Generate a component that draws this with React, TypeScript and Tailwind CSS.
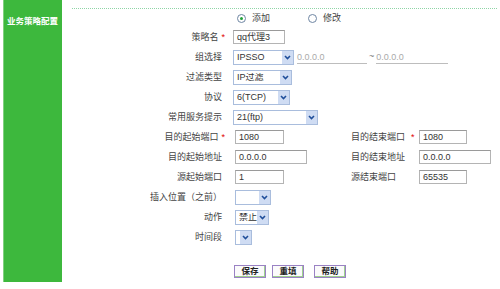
import type { ReactNode } from 'react'

function Chevron() {
  return (
    <svg width="7" height="5" viewBox="0 0 7 5" fill="none">
      <path d="M1 1L3.5 3.5L6 1" stroke="#1f4e9a" strokeWidth="1.6" />
    </svg>
  )
}

function Select({ value, className }: { value?: string; className: string }) {
  return (
    <div className={`flex h-[15px] items-center border border-[#a9bddd] bg-white ${className}`}>
      <span className="flex-1 overflow-hidden whitespace-nowrap pl-[3px] text-[9px] leading-none text-[#333]">
        {value}
      </span>
      <span className="flex h-[13px] w-[11px] shrink-0 items-center justify-center bg-[#cfdcf3]">
        <Chevron />
      </span>
    </div>
  )
}

function Input({ value, className }: { value: string; className: string }) {
  return (
    <div
      className={`flex h-[14px] items-center border border-[#b4b4b4] border-t-[#9a9a9a] bg-white pl-[3px] text-[9px] leading-none text-[#333] ${className}`}
    >
      {value}
    </div>
  )
}

function Star() {
  return <span className="ml-[3px] mr-[-3px] text-[9px] text-[#e00000]">*</span>
}

function Row({
  label,
  star,
  children,
  right,
}: {
  label: string
  star?: boolean
  children: ReactNode
  right?: { label: string; star?: boolean; field: ReactNode }
}) {
  return (
    <div className="flex h-[20px] items-center">
      <div className="w-[160px] shrink-0 text-right text-[9px] leading-none text-[#444]">
        {label}
        {star && <Star />}
      </div>
      <div className="ml-[11px] flex min-w-[118px] items-center">{children}</div>
      {right && (
        <>
          <div className="w-[68px] shrink-0 text-[9px] leading-none text-[#444]">
            {right.label}
            {right.star && <span className="ml-[6px] text-[9px] text-[#e00000]">*</span>}
          </div>
          {right.field}
        </>
      )}
    </div>
  )
}

function Radio({ checked, label }: { checked?: boolean; label: string }) {
  return (
    <label className="flex items-center gap-[6px]">
      <span className="flex size-[9px] items-center justify-center rounded-full border border-[#6f86a3] bg-white">
        {checked && <span className="size-[3px] rounded-full bg-[#22a03a]" />}
      </span>
      <span className="text-[9px] leading-none text-[#444]">{label}</span>
    </label>
  )
}

function Button({ children }: { children: string }) {
  return (
    <button
      type="button"
      className="flex h-[13px] w-[32px] items-center justify-center border border-[#9a82c4] bg-[#fbfbfb] text-[8.5px] font-bold leading-none text-[#222] shadow-[inset_-1px_-1px_0_#9fd18f]"
    >
      {children}
    </button>
  )
}

export default function App() {
  return (
    <div className="flex h-[289px] w-[500px] bg-white font-[family-name:Liberation_Sans,Noto_Sans_CJK_SC,sans-serif]">
      <div className="ml-[3px] h-[282px] w-[59px] shrink-0 border-l border-[#7fd17f] bg-[#3db83d] pl-[3px] pt-[7px]">
        <span className="text-[8.5px] font-bold leading-none text-white">业务策略配置</span>
      </div>

      <div className="flex flex-1 flex-col">
        <div className="ml-[10px] mr-[3px] mt-[8px] border-t border-dotted border-[#8fd5a6]" />

        <div className="flex h-[18px] items-center pl-[175px] pt-[1px]">
          <Radio checked label="添加" />
          <div className="ml-[38px]">
            <Radio label="修改" />
          </div>
        </div>

        <Row label="策略名" star>
          <Input value="qq代理3" className="w-[52px]" />
        </Row>

        <Row label="组选择">
          <Select value="IPSSO" className="w-[61px]" />
          <div className="ml-[3px] w-[70px] border-b border-[#bdbdbd] text-[9px] leading-[12px] text-[#aaa]">
            0.0.0.0
          </div>
          <span className="mx-[2px] text-[9px] text-[#777]">~</span>
          <div className="w-[72px] border-b border-[#bdbdbd] text-[9px] leading-[12px] text-[#aaa]">
            0.0.0.0
          </div>
        </Row>

        <Row label="过滤类型">
          <Select value="IP过滤" className="w-[59px]" />
        </Row>

        <Row label="协议">
          <Select value="6(TCP)" className="w-[57px]" />
        </Row>

        <Row label="常用服务提示">
          <Select value="21(ftp)" className="w-[85px]" />
        </Row>

        <Row
          label="目的起始端口"
          star
          right={{ label: '目的结束端口', star: true, field: <Input value="1080" className="w-[48px]" /> }}
        >
          <Input value="1080" className="ml-[2px] w-[49px]" />
        </Row>

        <Row
          label="目的起始地址"
          right={{ label: '目的结束地址', field: <Input value="0.0.0.0" className="w-[72px]" /> }}
        >
          <Input value="0.0.0.0" className="ml-[2px] w-[72px]" />
        </Row>

        <Row
          label="源起始端口"
          right={{ label: '源结束端口', field: <Input value="65535" className="w-[48px]" /> }}
        >
          <Input value="1" className="ml-[2px] w-[49px]" />
        </Row>

        <Row label="插入位置（之前）">
          <Select className="ml-[2px] w-[36px]" />
        </Row>

        <Row label="动作">
          <Select value="禁止" className="ml-[2px] w-[34px]" />
        </Row>

        <Row label="时间段">
          <Select className="ml-[2px] w-[17px]" />
        </Row>

        <div className="ml-[172px] mt-[18px] flex gap-[6px]">
          <Button>保存</Button>
          <Button>重填</Button>
          <div className="ml-[4px]">
            <Button>帮助</Button>
          </div>
        </div>
      </div>
    </div>
  )
}
